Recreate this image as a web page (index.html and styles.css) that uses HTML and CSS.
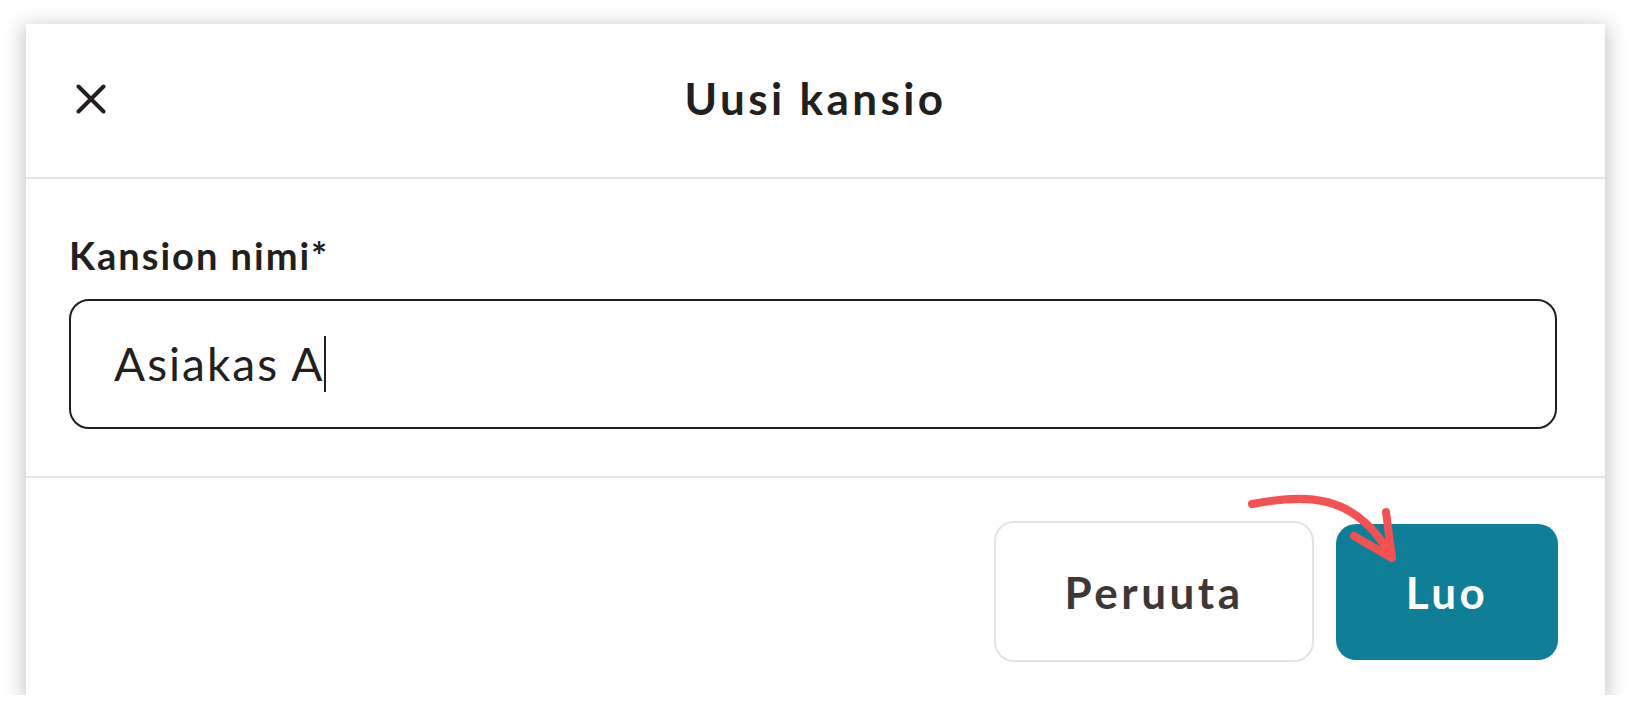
FILE: index.html
```html
<!DOCTYPE html>
<html lang="fi">
<head>
<meta charset="utf-8">
<title>Uusi kansio</title>
<link rel="stylesheet" href="styles.css">
</head>
<body>
<div class="dialog">
  <header class="dialog-header">
    <button class="close-btn" aria-label="Sulje">
      <svg width="30" height="30" viewBox="0 0 30 30"><path d="M2.5 2.5 L27.5 27.5 M27.5 2.5 L2.5 27.5" stroke="#231f1e" stroke-width="4" stroke-linecap="round" fill="none"/></svg>
    </button>
    <h1 class="dialog-title">Uusi kansio</h1>
    <span></span>
  </header>
  <section class="dialog-body">
    <label class="field-label">Kansion nimi*</label>
    <div class="text-input"><span class="input-value">Asiakas A</span><span class="caret"></span></div>
  </section>
  <footer class="dialog-footer">
    <button class="btn btn-secondary">Peruuta</button>
    <button class="btn btn-primary">Luo</button>
    <svg class="pointer-arrow" width="170" height="90" viewBox="0 0 170 90">
      <path d="M8 26 C 60 16, 110 14, 146 76" stroke="#f45252" stroke-width="8" stroke-linecap="round" fill="none"/>
      <path d="M142 34 L148 80 L110 58" stroke="#f45252" stroke-width="8" stroke-linecap="round" stroke-linejoin="round" fill="none"/>
    </svg>
  </footer>
</div>
</body>
</html>
```
FILE: styles.css
```css
* { box-sizing: border-box; }
html, body { margin: 0; padding: 0; background: #ffffff; }
body {
  padding: 24px 0 0 26px;
  font-family: Lato, "Noto Sans", sans-serif;
  color: #231f1e;
}
.dialog {
  width: 1579px;
  height: 671px;
  background: #fff;
  box-shadow: 0 4px 18px 3px rgba(0,0,0,0.22);
  display: flex;
  flex-direction: column;
}
.dialog-header {
  height: 155px;
  border-bottom: 2px solid #e4e4e4;
  display: grid;
  grid-template-columns: 1fr auto 1fr;
  align-items: center;
  padding: 0 0 0 50px;
}
.close-btn {
  border: 0;
  background: none;
  padding: 0;
  width: 30px;
  height: 30px;
  margin-top: -4px;
  cursor: pointer;
}
.close-btn svg { display: block; }
.dialog-title {
  margin: 0;
  font-size: 44px;
  font-weight: 700;
  letter-spacing: 3.4px;
  line-height: 1;
  margin-top: -6px;
  margin-left: -50px;
}
.dialog-body {
  padding: 52px 48px 47px 43px;
  border-bottom: 2px solid #e4e4e4;
  display: flex;
  flex-direction: column;
}
.field-label {
  font-size: 38px;
  font-weight: 700;
  line-height: 48px;
  letter-spacing: 2px;
  color: #231f1e;
}
.text-input {
  margin-top: 20px;
  height: 130px;
  border: 2px solid #231f20;
  border-radius: 20px;
  display: flex;
  align-items: center;
  padding-left: 43px;
  font-size: 46px;
  letter-spacing: 2px;
  color: #231f1e;
}
.input-value { line-height: 1; }
.caret {
  display: inline-block;
  width: 2px;
  height: 56px;
  background: #231f1e;
  margin-left: -1px;
}
.dialog-footer {
  flex: 1;
  position: relative;
  display: flex;
  justify-content: flex-end;
  align-items: flex-start;
  gap: 22px;
  padding: 43px 47px 0 0;
}
.btn {
  font-family: Lato, "Noto Sans", sans-serif;
  font-size: 44px;
  font-weight: 700;
  letter-spacing: 3.5px;
  border-radius: 20px;
  cursor: pointer;
}
.btn-secondary {
  width: 320px;
  height: 141px;
  background: #fff;
  border: 2px solid #e3e3e3;
  color: #3d3835;
}
.btn-primary {
  width: 222px;
  height: 136px;
  margin-top: 3px;
  background: #0e7f97;
  border: 0;
  color: #fff;
}
.pointer-arrow {
  position: absolute;
  left: 1218px;
  top: 0px;
  overflow: visible;
}
```
